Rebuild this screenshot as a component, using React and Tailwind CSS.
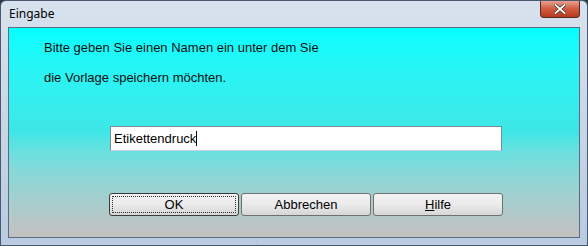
export default function App() {
  return (
    <div className="w-[588px] h-[246px] overflow-hidden bg-[#2b3a4a] font-['Liberation_Sans',Arial,sans-serif]">
      <div className="relative w-full h-full rounded-t-[6px] border border-[#4a5a6e] bg-gradient-to-b from-[#d8e2ee] via-[#c9d6e6] to-[#b8cbe2] flex flex-col">
        {/* title bar */}
        <div className="h-[26px] flex items-start pl-[8px] pt-[6px]">
          <span className="text-[12px] leading-[14px] text-black font-['Noto_Sans',sans-serif]">Eingabe</span>
        </div>
        <button className="absolute top-0 right-[7px] w-[40px] h-[17px] rounded-b-[4px] border border-t-0 border-[#5a2a22] bg-gradient-to-b from-[#e8a08e] via-[#cf5a40] to-[#b8391f] flex items-center justify-center">
          <svg width="12" height="10" viewBox="0 0 12 10">
            <path d="M1.5 1 L10.5 9 M10.5 1 L1.5 9" stroke="#3a1a14" strokeWidth="3.2" strokeLinecap="square" />
            <path d="M1.5 1 L10.5 9 M10.5 1 L1.5 9" stroke="#ffffff" strokeWidth="2" strokeLinecap="square" />
          </svg>
        </button>
        {/* client area */}
        <div className="mx-[7px] h-[211px] border border-[#5c6c80] bg-gradient-to-b from-[#00ffff] via-[#3ee6e6] to-[#c4c0c0] flex flex-col">
          <div className="pl-[35px] pt-[12px] text-[13px] leading-[16px] text-[#101010]">
            <p>Bitte geben Sie einen Namen ein unter dem Sie</p>
            <p className="mt-[14px]">die Vorlage speichern möchten.</p>
          </div>
          <div className="ml-[101px] mt-[40px] w-[392px] h-[25px] bg-white border border-[#7a8a9a] border-b-[#c8d0d8] flex items-center pl-[3px]">
            <span className="text-[13px] leading-[16px] text-black">Etikettendruck</span>
            <span className="w-px h-[15px] bg-black" />
          </div>
          <div className="ml-[100px] mt-[42px] flex gap-[2px]">
            <button className="w-[130px] h-[23px] rounded-[3px] border border-[#3c3c3c] bg-gradient-to-b from-[#f2f2f2] via-[#ebebeb] to-[#d6d6d6] p-[2px]">
              <div className="w-full h-full border border-dotted border-[#303030] flex items-center justify-center text-[13px] text-black">OK</div>
            </button>
            <button className="w-[130px] h-[23px] rounded-[3px] border border-[#707070] bg-gradient-to-b from-[#f2f2f2] via-[#ebebeb] to-[#d6d6d6] flex items-center justify-center text-[13px] text-black">
              Abbrechen
            </button>
            <button className="w-[130px] h-[23px] rounded-[3px] border border-[#707070] bg-gradient-to-b from-[#f2f2f2] via-[#ebebeb] to-[#d6d6d6] flex items-center justify-center text-[13px] text-black">
              <span><span className="underline">H</span>ilfe</span>
            </button>
          </div>
        </div>
      </div>
    </div>
  );
}
